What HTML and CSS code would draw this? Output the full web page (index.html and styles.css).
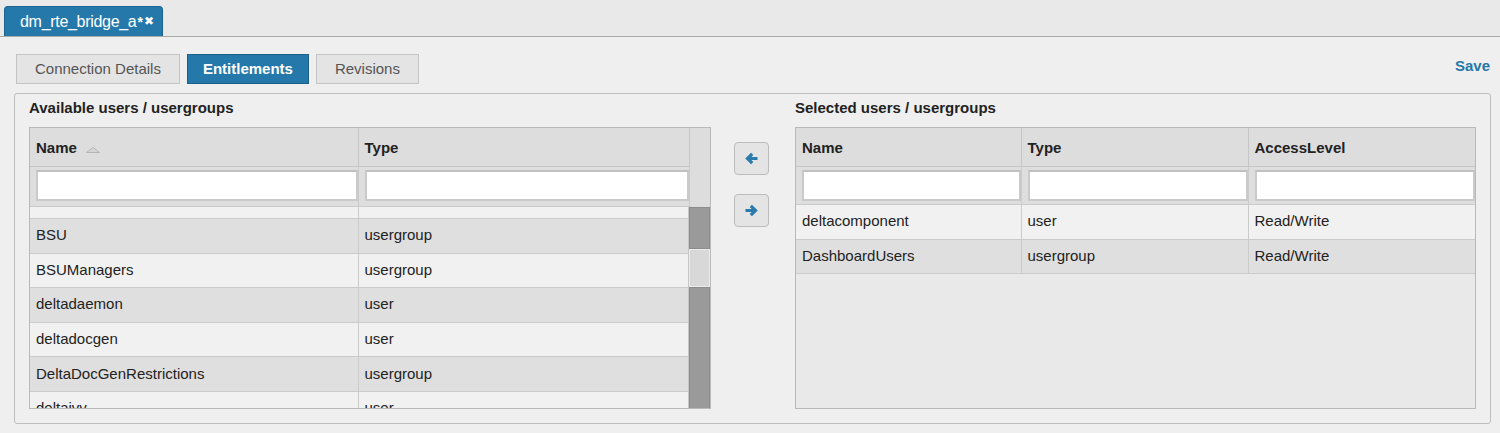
FILE: index.html
```html
<!DOCTYPE html>
<html lang="en">
<head>
    <meta charset="UTF-8">
    <title>dm_rte_bridge_a</title>
    <link rel="stylesheet" href="styles.css">
</head>
<body>

    <div class="tabbar">
        <div class="doc-tab">dm_rte_bridge_a<span class="dirty">*</span><span class="close">&#10006;</span></div>
    </div>

    <div class="toolbar">
        <button class="btn">Connection Details</button>
        <button class="btn active">Entitlements</button>
        <button class="btn">Revisions</button>
        <a class="save" href="#">Save</a>
    </div>

    <div class="panel">
        <div class="side left-side">
            <h3>Available users / usergroups</h3>
            <div class="grid avail-grid">
                <table class="grid-head">
                    <colgroup><col class="w-a"><col class="w-b"><col class="w-s"></colgroup>
                    <tr class="head-row">
                        <th>Name <svg class="sort" width="14" height="6" viewBox="0 0 14 6"><path d="M7 0.5L13.5 5.5H0.5Z" fill="#d6d6d6" stroke="#b4b4b4" stroke-width="1"/></svg></th>
                        <th>Type</th>
                        <th class="col-scroll" rowspan="2"></th>
                    </tr>
                    <tr class="filter-row">
                        <td><input type="text"></td>
                        <td><input type="text"></td>
                    </tr>
                </table>
                <div class="grid-body">
                    <div class="rows">
                        <table>
                            <colgroup><col class="w-a"><col></colgroup>
                            <tr class="light stub"><td></td><td></td></tr>
                            <tr class="dark"><td>BSU</td><td>usergroup</td></tr>
                            <tr class="light"><td>BSUManagers</td><td>usergroup</td></tr>
                            <tr class="dark"><td>deltadaemon</td><td>user</td></tr>
                            <tr class="light"><td>deltadocgen</td><td>user</td></tr>
                            <tr class="dark"><td>DeltaDocGenRestrictions</td><td>usergroup</td></tr>
                            <tr class="light"><td>deltaivy</td><td>user</td></tr>
                        </table>
                    </div>
                    <div class="scrollbar">
                        <div class="sb-dark top"></div>
                        <div class="sb-light"></div>
                        <div class="sb-dark rest"></div>
                    </div>
                </div>
            </div>
        </div>

        <div class="movers">
            <button class="move">
                <svg width="13" height="13" viewBox="0 0 13 13"><path d="M12.5 6.5H3M7.2 1.8L2.5 6.5l4.7 4.7" fill="none" stroke="#2a7bab" stroke-width="3.2"/></svg>
            </button>
            <button class="move">
                <svg width="13" height="13" viewBox="0 0 13 13"><path d="M0.5 6.5H10M5.8 1.8l4.7 4.7-4.7 4.7" fill="none" stroke="#2a7bab" stroke-width="3.2"/></svg>
            </button>
        </div>

        <div class="side right-side">
            <h3>Selected users / usergroups</h3>
            <div class="grid sel-grid">
                <table>
                    <colgroup><col class="w-1"><col class="w-2"><col></colgroup>
                    <tr class="head-row">
                        <th>Name</th>
                        <th>Type</th>
                        <th>AccessLevel</th>
                    </tr>
                    <tr class="filter-row">
                        <td><input type="text"></td>
                        <td><input type="text"></td>
                        <td><input type="text"></td>
                    </tr>
                    <tr class="light"><td>deltacomponent</td><td>user</td><td>Read/Write</td></tr>
                    <tr class="dark"><td>DashboardUsers</td><td>usergroup</td><td>Read/Write</td></tr>
                </table>
            </div>
        </div>
    </div>

</body>
</html>
```

FILE: styles.css
```css
body {
    margin: 0;
    padding: 0;
    font-family: "Liberation Sans", Arial, sans-serif;
    font-size: 15px;
    color: #222;
    background-color: #efefef;
}
.tabbar {
    height: 36px;
    background: #e9e9e9;
    border-bottom: 1px solid #a9a9a9;
    padding-left: 4px;
    display: flex;
    align-items: flex-end;
}
.doc-tab {
    height: 30px;
    width: 159px;
    box-sizing: border-box;
    background: #2479aa;
    border: 1px solid #1c6391;
    border-bottom: none;
    border-radius: 4px 4px 0 0;
    color: #fff;
    line-height: 28px;
    padding-left: 15px;
    font-size: 16px;
    letter-spacing: -0.3px;
    white-space: nowrap;
}
.doc-tab .dirty {
    font-weight: bold;
    font-size: 14px;
    margin-left: 1px;
}
.doc-tab .close {
    font-size: 12px;
    margin-left: 1px;
    vertical-align: 2px;
}
.toolbar {
    display: flex;
    align-items: center;
    gap: 7px;
    padding: 17px 10px 9px 16px;
}
.btn {
    height: 30px;
    padding: 0 18px 2px;
    font-family: inherit;
    font-size: 15px;
    color: #555;
    background: #e4e4e4;
    border: 1px solid #c4c4c4;
    border-radius: 0;
}
.btn.active {
    padding: 0 15px 2px;
    background: #2479aa;
    border-color: #1c5f88;
    color: #fff;
    font-weight: bold;
}
.save {
    margin-left: auto;
    color: #2677a8;
    font-weight: bold;
    font-size: 15px;
    text-decoration: none;
    margin-top: -8px;
}
.panel {
    display: flex;
    margin: 0 9px 0 14px;
    padding: 4px 14px 14px 14px;
    border: 1px solid #bdbdbd;
    border-radius: 3px;
    background: #efefef;
    height: 311px;
}
.side h3 {
    margin: 0 0 9px 0;
    font-size: 15px;
    line-height: 20px;
    color: #222;
}
.left-side {
    width: 682px;
}
.right-side {
    width: 681px;
}
.grid {
    border: 1px solid #b9b9b9;
    height: 282px;
    box-sizing: border-box;
    overflow: hidden;
}
.grid table {
    border-collapse: collapse;
    table-layout: fixed;
    width: 100%;
}
.w-a {
    width: 328px;
}
.w-b {
    width: 331px;
}
.w-s {
    width: 21px;
}
.w-1 {
    width: 225px;
}
.w-2 {
    width: 227px;
}
.grid th {
    background: #dddddd;
    text-align: left;
    height: 38px;
    padding: 0 0 0 6px;
    font-weight: bold;
    border-bottom: 1px solid #c6c6c6;
    border-right: 1px solid #c6c6c6;
    white-space: nowrap;
}
.grid th:last-child {
    border-right: none;
}
.sort {
    margin-left: 5px;
    vertical-align: 0;
}
.filter-row td {
    background: #dedede;
    height: 37px;
    padding: 0 1px 0 4px;
    border-right: 1px solid #c6c6c6;
    border-bottom: 1px solid #c6c6c6;
}
.filter-row input {
    display: block;
    width: 100%;
    box-sizing: border-box;
    height: 31px;
    border: 2px solid #cacaca;
    border-top-color: #c0c0c0;
    background: #fff;
}
.avail-grid th.col-scroll {
    border-bottom: none;
}
.grid-body {
    display: flex;
    height: 204px;
}
.rows {
    flex: 1;
    overflow: hidden;
}
.grid td {
    padding: 0 0 2px 6px;
    border-right: 1px solid #cbcbcb;
    border-bottom: 1px solid #cbcbcb;
    white-space: nowrap;
}
.rows td {
    height: 31.6px;
}
.rows tr.stub td {
    height: 11px;
    padding: 0;
}
.rows td:last-child {
    border-right: none;
}
.light td {
    background: #f1f1f1;
}
.dark td {
    background: #dfdfdf;
}
.scrollbar {
    width: 22px;
    display: flex;
    flex-direction: column;
    border-left: 1px solid #c6c6c6;
    box-sizing: border-box;
}
.sb-dark {
    background: #9a9a9a;
    border: 1px solid #8c8c8c;
}
.sb-dark.top {
    height: 40px;
}
.sb-light {
    height: 36px;
    background: #d8d8d8;
    border: 1px solid #ececec;
}
.sb-dark.rest {
    flex: 1;
}
.movers {
    display: flex;
    flex-direction: column;
    gap: 19px;
    margin: 44px 26px 0 23px;
}
.move {
    width: 35px;
    height: 33px;
    padding: 0;
    background: #e4e4e4;
    border: 1px solid #bcbcbc;
    border-radius: 4px;
    display: flex;
    align-items: center;
    justify-content: center;
}
.sel-grid {
    background: #e9e9e9;
}
.sel-grid td {
    height: 31.5px;
}
.sel-grid .filter-row td {
    height: 37px;
    padding-bottom: 0;
}
.sel-grid td:last-child {
    border-right: none;
}
```
